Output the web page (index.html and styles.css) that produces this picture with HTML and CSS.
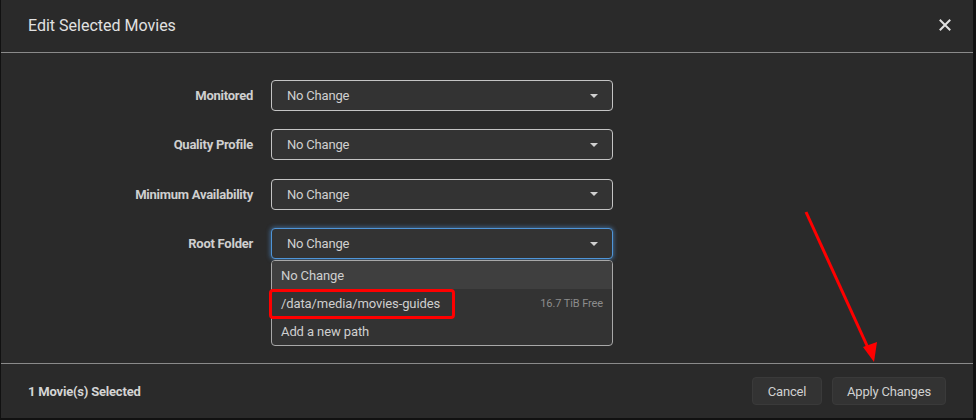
FILE: index.html
```html
<!DOCTYPE html>
<html>
<head>
<meta charset="utf-8">
<link rel="stylesheet" href="styles.css">
</head>
<body>
<div class="modal">
  <div class="header">
    <div class="title">Edit Selected Movies</div>
    <div class="close">
      <svg width="12" height="12" viewBox="0 0 12 12"><path d="M1.5 1.5 L10.5 10.5 M10.5 1.5 L1.5 10.5" stroke="#e0e0e0" stroke-width="2" stroke-linecap="square"/></svg>
    </div>
  </div>
  <div class="content">
    <div class="row">
      <div class="label">Monitored</div>
      <div class="select"><span>No Change</span><i class="caret"></i></div>
    </div>
    <div class="row">
      <div class="label">Quality Profile</div>
      <div class="select"><span>No Change</span><i class="caret"></i></div>
    </div>
    <div class="row">
      <div class="label">Minimum Availability</div>
      <div class="select"><span>No Change</span><i class="caret"></i></div>
    </div>
    <div class="row">
      <div class="label">Root Folder</div>
      <div class="field">
        <div class="select focused"><span>No Change</span><i class="caret"></i></div>
        <div class="menu">
          <div class="item active">No Change</div>
          <div class="item"><span>/data/media/movies-guides</span><span class="free">16.7 TiB Free</span></div>
          <div class="item">Add a new path</div>
          <div class="mark"></div>
        </div>
      </div>
    </div>
  </div>
  <div class="footer">
    <div class="count">1 Movie(s) Selected</div>
    <div class="buttons">
      <button class="btn">Cancel</button>
      <button class="btn">Apply Changes</button>
    </div>
  </div>
  <svg class="arrow" width="976" height="420" viewBox="0 0 976 420">
    <line x1="806" y1="212" x2="869" y2="350" stroke="#ff0000" stroke-width="3"/>
    <polygon points="874,362 863,347 877,342" fill="#ff0000"/>
  </svg>
</div>
</body>
</html>
```
FILE: styles.css
```css
* { box-sizing: border-box; }
html, body { margin: 0; padding: 0; }
body {
  background: #111;
  width: 976px;
  height: 420px;
  overflow: hidden;
  font-family: Roboto, "Liberation Sans", sans-serif;
}
.modal {
  position: relative;
  margin-left: 1px;
  width: 972px;
  height: 418px;
  background: #2a2a2a;
  display: flex;
  flex-direction: column;
}
.header {
  height: 53px;
  border-bottom: 1px solid #8a8a8a;
  display: flex;
  align-items: center;
  justify-content: space-between;
  padding: 0 22px 0 27px;
}
.title {
  color: #e1e1e1;
  font-size: 16px;
  letter-spacing: 0;
  padding-bottom: 2px;
}
.close { display: flex; padding-bottom: 2px; }
.content {
  flex: 1;
  padding-top: 27px;
  display: flex;
  flex-direction: column;
  gap: 18.4px;
}
.row {
  display: flex;
  align-items: flex-start;
  gap: 18px;
}
.label {
  width: 252px;
  text-align: right;
  color: #cfcfcf;
  font-size: 13px;
  font-weight: 700;
  letter-spacing: -0.25px;
  line-height: 31px;
}
.field { position: relative; }
.select {
  width: 342px;
  height: 31px;
  background: #333;
  border: 1px solid #c4c4c4;
  border-radius: 4px;
  display: flex;
  align-items: center;
  justify-content: space-between;
  padding: 0 14px 0 15px;
  color: #d0d0d0;
  font-size: 13px;
  letter-spacing: -0.2px;
}
.select.focused {
  border-color: #4f95d8;
  box-shadow: 0 0 4px 1px rgba(80, 150, 220, 0.55);
}
.caret {
  width: 0;
  height: 0;
  border-left: 4px solid transparent;
  border-right: 4px solid transparent;
  border-top: 4px solid #d0d0d0;
}
.menu {
  position: absolute;
  left: 0;
  top: 32px;
  width: 342px;
  border: 1px solid #a8a8a8;
  border-radius: 4px;
  background: #333;
  overflow: visible;
}
.item {
  height: 28px;
  display: flex;
  align-items: center;
  justify-content: space-between;
  padding: 0 9px 0 9px;
  color: #cfcfcf;
  font-size: 13px;
  letter-spacing: -0.1px;
}
.item:last-of-type { height: 29px; }
.item.active { background: #3f3f3f; border-radius: 3px 3px 0 0; }
.free { color: #8c8c8c; font-size: 11px; }
.mark {
  position: absolute;
  left: -3px;
  top: 28px;
  width: 186px;
  height: 30px;
  border: 3px solid #ff0000;
  border-radius: 4px;
}
.footer {
  height: 55px;
  border-top: 1px solid #8a8a8a;
  display: flex;
  align-items: center;
  justify-content: space-between;
  padding: 0 27px 0 27px;
}
.count {
  color: #d4d4d4;
  font-size: 13px;
  font-weight: 700;
  letter-spacing: -0.2px;
}
.buttons { display: flex; gap: 10px; }
.btn {
  height: 28px;
  background: #333;
  border: 1px solid #3a3a3a;
  border-radius: 4px;
  color: #d0d0d0;
  font-family: Roboto, "Liberation Sans", sans-serif;
  font-size: 13px;
  letter-spacing: -0.2px;
  padding: 0 14px;
}
.btn:first-child { width: 70px; }
.btn:last-child { width: 114px; }
.arrow {
  position: absolute;
  left: -1px;
  top: 0;
  pointer-events: none;
}
```
